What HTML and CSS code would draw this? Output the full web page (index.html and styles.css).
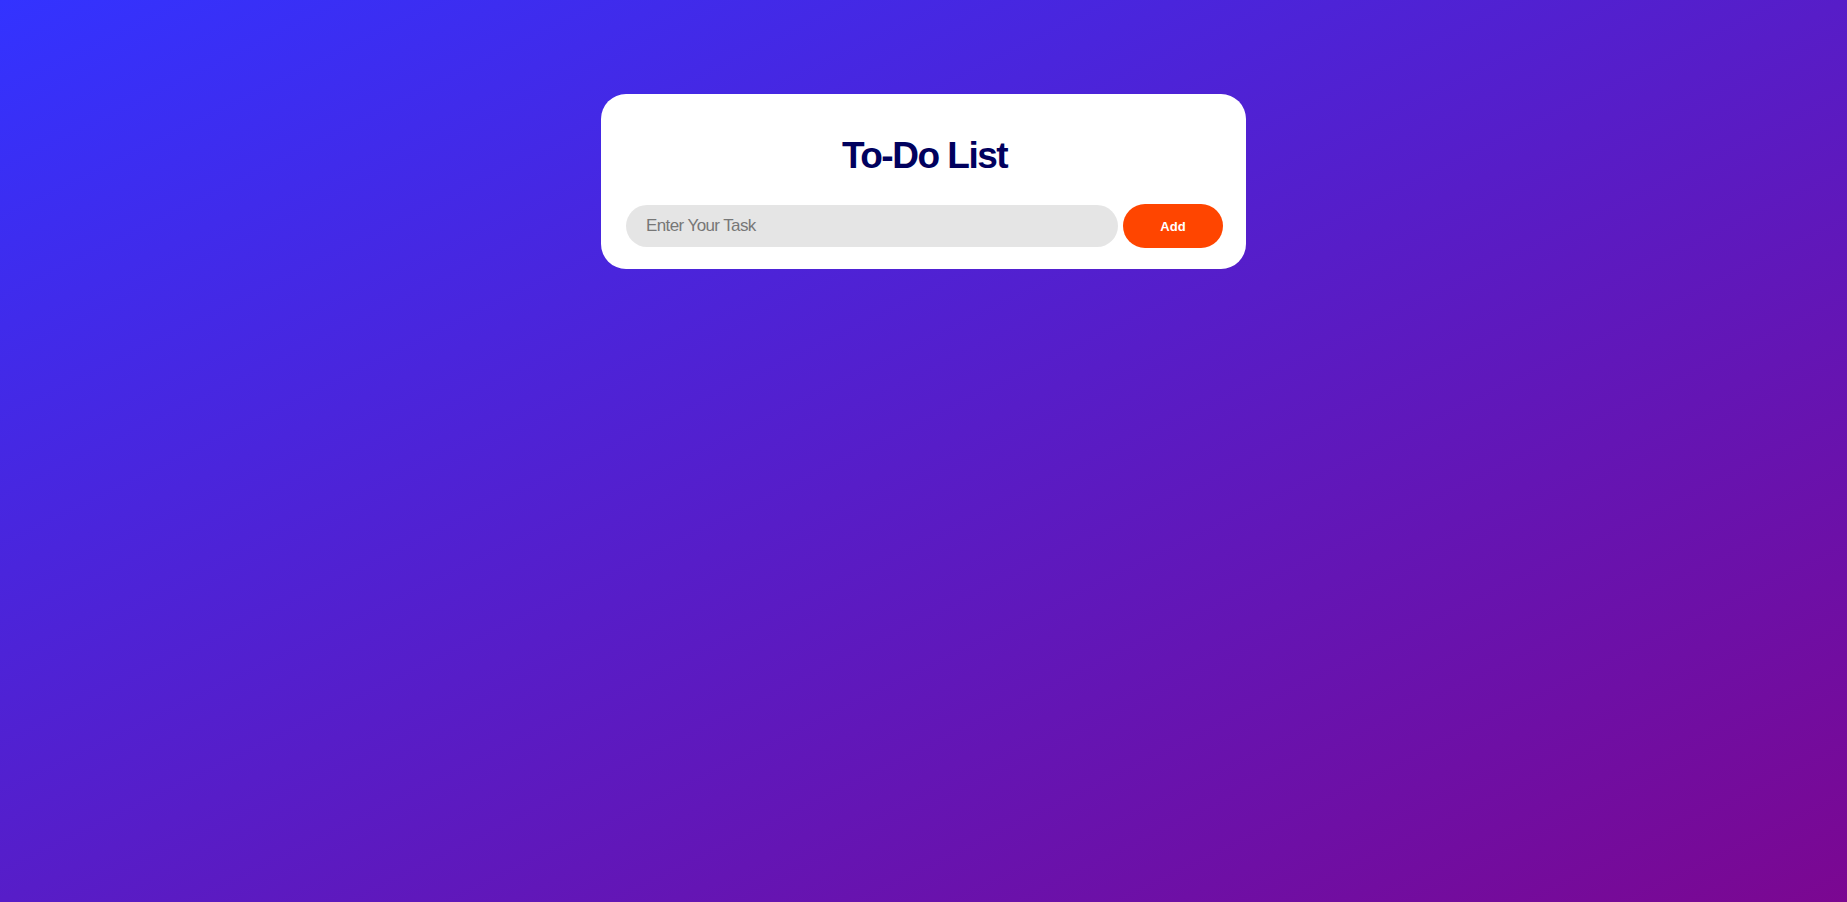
FILE: index.html
```html
<!DOCTYPE html>
<html lang="en">
<head>
<meta charset="UTF-8">
<title>To-Do List</title>
<link rel="stylesheet" href="styles.css">
</head>
<body>
  <div class="container">
    <div class="todo-app">
      <h1 class="title">To-Do List</h1>
      <div class="row">
        <input class="task-input" type="text" placeholder="Enter Your Task">
        <button class="add-btn">Add</button>
      </div>
    </div>
  </div>
</body>
</html>
```
FILE: styles.css
```css
* { box-sizing: border-box; }
html, body { margin: 0; padding: 0; }
body {
  width: 100%;
  min-height: 100vh;
  background: linear-gradient(to bottom right, #3333ff, #7b0791);
  font-family: "Liberation Sans", Arial, sans-serif;
}
.container {
  display: flex;
  justify-content: center;
  padding-top: 94px;
}
.todo-app {
  width: 645px;
  background: #fff;
  border-radius: 25px;
  padding: 40px 23px 21px 25px;
}
.title {
  margin: 0 0 26px;
  text-align: center;
  font-size: 37px;
  line-height: 44px;
  font-weight: 700;
  letter-spacing: -1.5px;
  color: #01015e;
}
.row {
  display: flex;
  align-items: center;
  gap: 5px;
}
.task-input {
  flex: 1;
  height: 42px;
  border: none;
  outline: none;
  background: #e5e5e5;
  border-radius: 21px;
  padding: 0 20px;
  font-family: "Liberation Sans", Arial, sans-serif;
  font-size: 17px;
  letter-spacing: -0.6px;
  color: #333;
}
.task-input::placeholder { color: #777; }
.add-btn {
  width: 100px;
  height: 44px;
  border: none;
  border-radius: 22px;
  background: #ff4500;
  color: #fff;
  font-family: "Liberation Sans", Arial, sans-serif;
  font-size: 13px;
  font-weight: 700;
  cursor: pointer;
}
```
